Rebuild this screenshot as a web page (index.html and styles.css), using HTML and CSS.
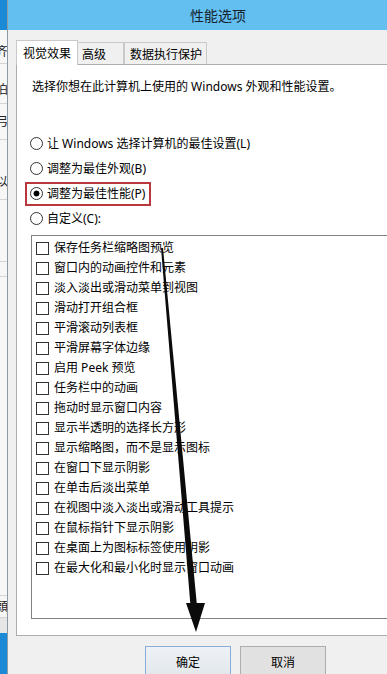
FILE: index.html
```html
<!DOCTYPE html>
<html lang="zh-CN">
<head>
<meta charset="utf-8">
<title>性能选项</title>
<link rel="stylesheet" href="styles.css">
</head>
<body>
<div class="screen">
  <div class="bgwin">
    <div class="bg-top"></div>
    <div class="bg-mid">
      <div class="bg-cell c1"><span class="bg-ch">齐</span></div>
      <div class="bg-cell c2"><span class="bg-ch">泊</span></div>
      <div class="bg-cell c3"><span class="bg-ch">弓</span></div>
      <div class="bg-cell c4"><span class="bg-ch">以</span></div>
      <div class="bg-cell c5"></div>
      <div class="bg-cell c6"></div>
      <div class="bg-cell c7"></div>
      <div class="bg-cell c8"><span class="bg-ch">頭</span></div>
      <div class="bg-cell c9"></div>
    </div>
    <div class="bg-bottom"></div>
  </div>

  <div class="dialog">
    <div class="titlebar">性能选项</div>
    <div class="dbody">
      <div class="tabs">
        <div class="tab active">视觉效果</div>
        <div class="tab t2">高级</div>
        <div class="tab t3">数据执行保护</div>
      </div>
      <div class="pane">
        <p class="desc">选择你想在此计算机上使用的 Windows 外观和性能设置。</p>
        <div class="radios">
          <div class="radio-row"><span class="radio-label"><span class="radio"></span>让 Windows 选择计算机的最佳设置(L)</span></div>
          <div class="radio-row"><span class="radio-label"><span class="radio"></span>调整为最佳外观(B)</span></div>
          <div class="radio-row"><span class="radio-label mark"><span class="radio on"></span>调整为最佳性能(P)</span></div>
          <div class="radio-row"><span class="radio-label"><span class="radio"></span>自定义(C):</span></div>
        </div>
        <div class="list">
          <div class="item"><span class="box"></span>保存任务栏缩略图预览</div>
          <div class="item"><span class="box"></span>窗口内的动画控件和元素</div>
          <div class="item"><span class="box"></span>淡入淡出或滑动菜单到视图</div>
          <div class="item"><span class="box"></span>滑动打开组合框</div>
          <div class="item"><span class="box"></span>平滑滚动列表框</div>
          <div class="item"><span class="box"></span>平滑屏幕字体边缘</div>
          <div class="item"><span class="box"></span>启用 Peek 预览</div>
          <div class="item"><span class="box"></span>任务栏中的动画</div>
          <div class="item"><span class="box"></span>拖动时显示窗口内容</div>
          <div class="item"><span class="box"></span>显示半透明的选择长方形</div>
          <div class="item"><span class="box"></span>显示缩略图，而不是显示图标</div>
          <div class="item"><span class="box"></span>在窗口下显示阴影</div>
          <div class="item"><span class="box"></span>在单击后淡出菜单</div>
          <div class="item"><span class="box"></span>在视图中淡入淡出或滑动工具提示</div>
          <div class="item"><span class="box"></span>在鼠标指针下显示阴影</div>
          <div class="item"><span class="box"></span>在桌面上为图标标签使用阴影</div>
          <div class="item"><span class="box"></span>在最大化和最小化时显示窗口动画</div>
        </div>
      </div>
      <div class="buttons">
        <button class="btn default">确定</button>
        <button class="btn">取消</button>
      </div>
    </div>
  </div>

  <svg class="arrow" width="387" height="674" viewBox="0 0 387 674" aria-hidden="true">
    <polygon points="161,248 163,248 197,606 190.5,606" fill="#0b0b0b"/>
    <polygon points="186,603 205,603 196,632" fill="#0b0b0b"/>
  </svg>
</div>
</body>
</html>
```

FILE: styles.css
```css
html, body {
  margin: 0;
  padding: 0;
}

body {
  width: 387px;
  height: 674px;
  overflow: hidden;
  background: #f0f0f0;
  color: #000;
  font-family: "Noto Sans", "Noto Sans CJK SC", sans-serif;
  font-size: 12px;
}

.screen {
  position: relative;
  display: flex;
  width: 387px;
  height: 674px;
  overflow: hidden;
}

/* background window strip on the left */
.bgwin {
  flex: none;
  width: 7px;
  display: flex;
  flex-direction: column;
  background: #f7f7f7;
  overflow: hidden;
}

.bg-top {
  height: 30px;
  background: #1b8ad6;
}

.bg-bottom {
  height: 41px;
  background: #1b8ad6;
}

.bg-mid {
  flex: 1;
  display: flex;
  flex-direction: column;
}

.bg-cell {
  box-sizing: border-box;
  border-bottom: 1px solid #d4d4d4;
  display: flex;
  align-items: center;
  overflow: hidden;
}

.bg-ch {
  margin-left: -4px;
  font-size: 12px;
  line-height: 12px;
  color: #222;
}

.c1 { height: 34px; padding-top: 10px; }
.c2 { height: 40px; padding-top: 12px; }
.c3 { height: 36px; }
.c4 { height: 60px; padding-top: 24px; }
.c5 { height: 62px; }
.c6 { height: 15px; }
.c7 { flex: 1; }
.c8 { height: 22px; }
.c9 { height: 15px; background: #e6e6e6; border-bottom: none; }

/* dialog */
.dialog {
  flex: none;
  width: 420px;
  display: flex;
  flex-direction: column;
  border-left: 1px solid #8c9aa6;
}

.titlebar {
  height: 30px;
  flex: none;
  background: #63bff0;
  display: flex;
  align-items: center;
  justify-content: center;
  font-family: "Noto Sans CJK SC", sans-serif;
  font-size: 14px;
  color: #16232d;
}

.dbody {
  flex: 1;
  background: #f0f0f0;
  padding: 10px 0 0 8px;
}

.tabs {
  display: flex;
  align-items: flex-end;
  height: 24px;
  position: relative;
  z-index: 1;
}

.tab {
  box-sizing: border-box;
  height: 22px;
  border: 1px solid #c9c9c9;
  border-bottom: none;
  background: #f0f0f0;
  display: flex;
  align-items: center;
  white-space: nowrap;
}

.tab.active {
  width: 62px;
  height: 25px;
  margin-bottom: -1px;
  background: #fff;
  padding-left: 6px;
}

.tab.t2 {
  width: 46px;
  padding-left: 4px;
  border-left: none;
}

.tab.t3 {
  width: 83px;
  padding-left: 5px;
}

.pane {
  box-sizing: border-box;
  width: 403px;
  height: 572px;
  border: 1px solid #adadad;
  background: #fff;
  padding: 14px 14px 0 14px;
}

.desc {
  margin: 0;
  padding-left: 1px;
  height: 16px;
  line-height: 16px;
  white-space: nowrap;
}

.radios {
  margin-top: 36px;
  margin-left: -1px;
}

.radio-row {
  height: 25px;
  display: flex;
  align-items: center;
}

.radio-label {
  display: inline-flex;
  align-items: center;
  gap: 4px;
  line-height: 16px;
  white-space: nowrap;
}

.radio {
  box-sizing: border-box;
  width: 13px;
  height: 13px;
  border: 1px solid #333;
  border-radius: 50%;
  background: #fff;
  flex: none;
}

.radio.on {
  background: radial-gradient(circle, #000 0 2.6px, #fff 3.3px);
}

.mark {
  outline: 2px solid #b8383d;
  margin-left: -3px;
  padding: 2px 4px 2px 3px;
}

.list {
  box-sizing: border-box;
  margin-top: 4px;
  height: 384px;
  border: 1px solid #828282;
  padding: 2px 0 0 4px;
  background: #fff;
}

.item {
  height: 20px;
  display: flex;
  align-items: center;
  gap: 5px;
  line-height: 16px;
  white-space: nowrap;
}

.box {
  box-sizing: border-box;
  width: 13px;
  height: 13px;
  border: 1px solid #333;
  background: #fff;
  flex: none;
}

.buttons {
  margin-top: 10px;
  padding-left: 129px;
  display: flex;
  gap: 9px;
}

.btn {
  box-sizing: border-box;
  flex: none;
  width: 86px;
  height: 30px;
  margin: 0;
  padding: 0;
  border: 1px solid #adadad;
  background: #e1e1e1;
  font-family: "Noto Sans CJK SC", sans-serif;
  font-size: 12px;
  color: #000;
}

.btn.default {
  border-color: #86aed6;
  background: linear-gradient(#eef2f6, #e3e8ed);
}

.arrow {
  position: absolute;
  left: 0;
  top: 0;
  pointer-events: none;
}
```
